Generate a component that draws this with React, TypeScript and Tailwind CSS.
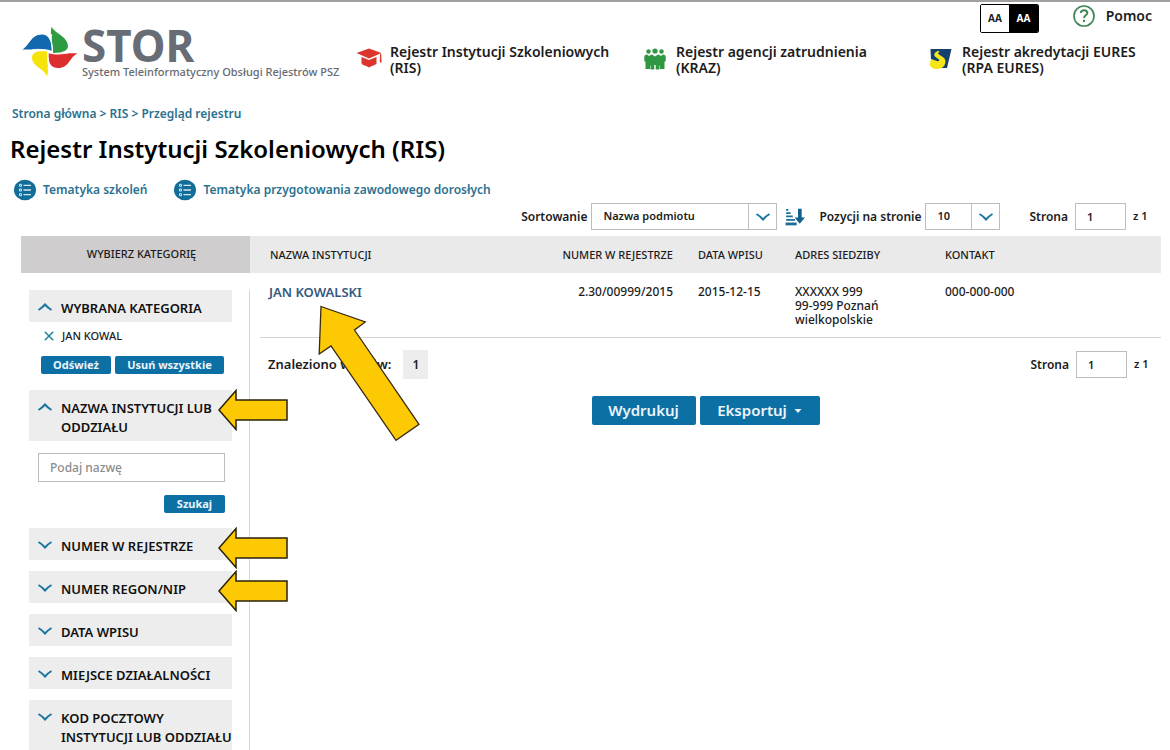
import React, { useState } from "react";

function Chevron({ up = false }: { up?: boolean }) {
  return (
    <svg viewBox="0 0 16 10" className="h-[10px] w-4 shrink-0" fill="none" stroke="#1b769f" strokeWidth="2" aria-hidden="true">
      <path d={up ? "M1.5 8Q5 6 8 2.5Q11 6 14.5 8" : "M1.5 2Q5 4 8 7.5Q11 4 14.5 2"} />
    </svg>
  );
}

function Logo() {
  return (
    <svg viewBox="0 0 56 52" className="h-[52px] w-14 shrink-0" aria-hidden="true">
      <path d="M0.5 23.5C7 20 9 8.500 20 8.500C27 8.500 30 16 29.500 25C23 22 16 24 0.500 23.500Z" fill="#1268ad" />
      <path d="M29.500 0.500C32 7 45.500 10 46 20C46 24 42 27 31 27C31 17 27.500 12 29.500 0.500Z" fill="#2e9a42" />
      <path d="M55.500 27.500C47 31 48 42 36 42C29 42 26 37 26.500 27C35 29.500 44 26.500 55.500 27.500Z" fill="#dc2f2d" />
      <path d="M25 50.500C23 43 10 41 10 31.500C10 26 16 24.500 25.500 25.500C24 36 28 41 25 50.500Z" fill="#f7e30c" />
      <path d="M29.700 8C28 16 31.500 20 30.500 27.500M10 23.800C20 22.500 24 24 30 27M26 25.500C25.500 33 27.500 37 26 43M26 26.500C33 29 39 28 46 27" fill="none" stroke="#fff" strokeWidth="0.900" />
    </svg>
  );
}

function CapIcon() {
  return (
    <svg viewBox="0 0 26 20" className="h-5 w-[26px] shrink-0" fill="#dc352c" aria-hidden="true">
      <path d="M13 0.500L25.500 5L13 10.500L0.500 5Z" />
      <path d="M5.500 9L13 12L20.500 9V15.500C19 17.500 16 17.500 13 19.500C10 17.500 7 17.500 5.500 15.500Z" />
      <path d="M24 6H25.200L25.500 14.500H23.800Z" />
    </svg>
  );
}

function PeopleIcon() {
  return (
    <svg viewBox="0 0 22 22" className="mx-0.5 h-[22px] w-[22px] shrink-0" fill="#2f9741" aria-hidden="true">
      <circle cx="4.500" cy="3.500" r="2.200" />
      <circle cx="11" cy="3" r="2.600" />
      <circle cx="17.500" cy="3.500" r="2.200" />
      <path d="M0.300 9Q0.300 6.500 3 6.500L5 8L7 6.700L8 6.500L11 8.500L14 6.500L15 6.700L17 8L19 6.500Q21.700 6.500 21.700 9V13.500H20.500V21H16V17.500H15.500V21.500H11.700V17H10.300V21.500H6.500V17.500H6V21H1.500V13.500H0.300Z" />
    </svg>
  );
}

function EuresIcon() {
  return (
    <svg viewBox="0 0 24 22" className="mx-px h-[22px] w-6 shrink-0" aria-hidden="true">
      <path d="M1.500 1H22.500L18 20H12L2 12Z" fill="#15416f" />
      <path d="M9 3C5 4.500 4.500 7 6.500 9L10 11.500C11 13 9 14 6.500 12.500L2 11L0.500 17C3 21.500 9 22 12.500 20C17 17.500 17.500 12 14.500 9.500L10 6.500C8.500 5.500 9 4.500 11 3.500Z" fill="#f5e618" />
    </svg>
  );
}

function ListBadge() {
  return (
    <svg viewBox="0 0 22 22" className="h-[22px] w-[22px] shrink-0" fill="none" aria-hidden="true">
      <ellipse cx="11" cy="11" rx="11" ry="10.300" fill="#126d99" />
      <g stroke="#cfe6f1" strokeWidth="1.300">
        <path d="M9.500 6.300H17M9.500 11H17M9.500 15.700H17" />
        <path d="M5.500 5.300H7.500V7.300H5.500ZM5.500 10H7.500V12H5.500ZM5.500 14.700H7.500V16.700H5.500Z" strokeWidth="1" />
      </g>
    </svg>
  );
}

function SortIcon() {
  return (
    <svg viewBox="0 0 18 16" className="h-[18px] w-5" aria-hidden="true">
      <path d="M1 1.500H3M1 4.500H5M1 7.500H7M1 10.500H9" stroke="#1b6d98" strokeWidth="1.600" />
      <path d="M0.500 13H10.500V15.500H0.500Z" fill="#1b6d98" />
      <path d="M11.700 0.500H15V8.500H18L13.300 14L8.700 8.500H11.700Z" fill="#125f90" />
    </svg>
  );
}

function SideArrow() {
  return (
    <svg viewBox="0 0 70 42" className="pointer-events-none absolute -right-14 -top-px z-10 h-[42px] w-[70px]" aria-hidden="true">
      <path d="M1 21L18 1.500V11H69V31H18V40.500Z" fill="#fdc903" stroke="#2b220b" strokeWidth="1.500" />
    </svg>
  );
}

function Panel({ title, open = false, arrow = false }: { title: string; open?: boolean; arrow?: boolean }) {
  return (
    <div className="relative">
      <button type="button" aria-expanded={open} className="flex w-full items-start bg-[#ededed] pb-1 pl-2 pt-[9px] text-left text-[13px] font-semibold leading-[19px] text-[#111111]">
        <span className="mt-[3px] flex w-6 shrink-0">
          <Chevron up={open} />
        </span>
        <span className="min-w-0 flex-1 whitespace-pre">{title}</span>
      </button>
      {arrow && <SideArrow />}
    </div>
  );
}

function Select({ label, options, wide = false }: { label: string; options: string[]; wide?: boolean }) {
  return (
    <label className="flex items-center gap-1">
      <span>{label}</span>
      <span className={wide ? "relative flex h-[27px] w-[186px] border border-[#bdbdbd] text-[11px]" : "relative flex h-[27px] w-[75px] border border-[#bdbdbd] text-[11px]"}>
        <select className="w-full appearance-none bg-transparent pl-[11px] outline-none">
          {options.map((o) => (
            <option key={o}>{o}</option>
          ))}
        </select>
        <span className="pointer-events-none absolute inset-y-0 right-0 flex w-7 items-center justify-center border-l border-[#bdbdbd]">
          <Chevron />
        </span>
      </span>
    </label>
  );
}

function Pager() {
  const [page, setPage] = useState("1");
  return (
    <div className="flex items-center gap-[7px] text-[12px]">
      <label className="flex items-center gap-[7px]">
        Strona
        <input value={page} onChange={(e) => setPage(e.target.value)} className="h-[27px] w-[51px] border border-[#bdbdbd] pl-[11px] text-[11px] outline-none" />
      </label>
      <span className="w-[21px] text-[11px]">z 1</span>
    </div>
  );
}

const registers = [
  { name: "Rejestr Instytucji Szkoleniowych", code: "(RIS)", icon: <CapIcon /> },
  { name: "Rejestr agencji zatrudnienia", code: "(KRAZ)", icon: <PeopleIcon /> },
  { name: "Rejestr akredytacji EURES", code: "(RPA EURES)", icon: <EuresIcon /> },
];

const smallButton = "h-[18px] rounded-[2px] bg-[#0d70a5] text-[11px] font-bold leading-[18px] text-[#e9f5fb]";
const bigButton = "flex h-[29px] items-center justify-center rounded-[2px] bg-[#0d70a5] text-[15px] font-semibold text-[#e9f5fb]";

export default function App() {
  return (
    <div className="min-h-screen overflow-x-hidden border-t-2 border-[#a0a0a0] bg-white font-['Noto_Sans',sans-serif] text-[#1c1c1c]">
      <header className="flex">
        <a href="#stor" className="flex w-[356px] shrink-0 items-start pl-[22px] pt-6">
          <Logo />
          <span className="ml-1 flex flex-col whitespace-nowrap">
            <span className="text-[44px] font-bold leading-[38px] text-[#686c75]">STOR</span>
            <span className="text-[11px] font-medium leading-4 text-[#666970]">System Teleinformatyczny Obsługi Rejestrów PSZ</span>
          </span>
        </a>
        <div className="min-w-0 flex-1">
          <div className="flex h-[42px] items-start justify-end pr-[18px] pt-[2px]">
            <div className="flex h-[29px] w-[59px] overflow-hidden rounded-[2px] border border-black text-[10px] font-bold">
              <button type="button" className="flex-1 bg-white">AA</button>
              <button type="button" className="flex-1 bg-black text-white">AA</button>
            </div>
            <a href="#pomoc" className="ml-[34px] mt-px flex items-center gap-[11px] text-sm font-semibold leading-[22px]">
              <svg viewBox="0 0 22 22" className="h-[22px] w-[22px]" fill="none" stroke="#438657" aria-hidden="true">
                <circle cx="11" cy="11" r="10" strokeWidth="1.700" />
                <path d="M7.800 8C8 5.800 9.300 5.200 11 5.200C13 5.200 14.300 6.300 14.300 8C14.300 10.300 11 10.200 11 13M11 14.800V17" strokeWidth="2" />
              </svg>
              Pomoc
            </a>
          </div>
          <nav className="grid grid-cols-[286px_286px_auto] text-sm font-semibold leading-4">
            {registers.map((r) => (
              <a key={r.code} href="#rejestr" className="flex items-start gap-2 whitespace-nowrap">
                <span className="mt-1 flex">{r.icon}</span>
                <span>
                  {r.name}
                  <br />
                  {r.code}
                </span>
              </a>
            ))}
          </nav>
        </div>
      </header>

      <nav className="mt-6 pl-3 text-xs font-semibold leading-5 text-[#2b7190]">
        <a href="#home">Strona główna</a> &gt; <a href="#ris">RIS</a> &gt; <a href="#przeglad">Przegląd rejestru</a>
      </nav>
      <h1 className="mt-[9px] pl-[10px] text-2xl font-semibold leading-8 text-black">Rejestr Instytucji Szkoleniowych (RIS)</h1>
      <div className="mt-[14px] flex gap-[27px] pl-[14px] text-xs font-semibold leading-[22px] text-[#2b7190]">
        <a href="#szkolenia" className="flex gap-[7px]"><ListBadge />Tematyka szkoleń</a>
        <a href="#dorosli" className="flex gap-[7px]"><ListBadge />Tematyka przygotowania zawodowego dorosłych</a>
      </div>

      <div className="mt-[2px] flex items-center justify-end whitespace-nowrap pr-2 text-[12px] font-semibold">
        <Select label="Sortowanie" options={["Nazwa podmiotu", "Data wpisu"]} wide />
        <button type="button" aria-label="Kierunek sortowania" className="ml-2 mr-[14px]"><SortIcon /></button>
        <Select label="Pozycji na stronie" options={["10", "20", "50"]} />
        <div className="ml-[29px] mr-2"><Pager /></div>
      </div>

      <div className="mt-[6px] flex items-stretch pl-[21px] pr-[9px]">
        <aside className="flex w-[229px] shrink-0 flex-col">
          <h2 className="flex h-[37px] items-center justify-center bg-[#cfcdce] pl-3 text-[11px] font-medium">WYBIERZ KATEGORIĘ</h2>
          <div className="mt-[17px] flex-1 border-r border-[#d8d8d8] pl-2 pr-[17px]">
            <Panel title="WYBRANA KATEGORIA" open />
            <div className="ml-[15px] mt-[5px] flex items-center gap-2 text-[11px] font-medium leading-[18px]">
              <button type="button" aria-label="Usuń JAN KOWAL">
                <svg viewBox="0 0 10 10" className="h-[10px] w-[10px]" stroke="#1f8295" strokeWidth="1.500" aria-hidden="true">
                  <path d="M0.800 0.800L9.200 9.200M9.200 0.800L0.800 9.200" />
                </svg>
              </button>
              JAN KOWAL
            </div>
            <div className="ml-3 mt-[11px] flex gap-1">
              <button type="button" className={smallButton + " w-[70px]"}>Odśwież</button>
              <button type="button" className={smallButton + " w-[109px]"}>Usuń wszystkie</button>
            </div>
            <div className="mt-4">
              <Panel title={"NAZWA INSTYTUCJI LUB\nODDZIAŁU"} open arrow />
            </div>
            <div className="mt-3 pl-[9px] pr-[7px]">
              <input aria-label="Podaj nazwę" placeholder="Podaj nazwę" className="h-[29px] w-full border border-[#bdbdbd] pl-[11px] text-xs font-medium outline-none placeholder:text-[#8c8c8c]" />
              <div className="mt-[13px] flex justify-end">
                <button type="button" className={smallButton + " w-[61px]"}>Szukaj</button>
              </div>
            </div>
            <div className="mt-[15px] flex flex-col gap-[11px]">
              <Panel title="NUMER W REJESTRZE" arrow />
              <Panel title="NUMER REGON/NIP" arrow />
              <Panel title="DATA WPISU" />
              <Panel title="MIEJSCE DZIAŁALNOŚCI" />
              <Panel title={"KOD POCZTOWY\nINSTYTUCJI LUB ODDZIAŁU"} />
            </div>
          </div>
        </aside>

        <main className="relative min-w-0 flex-1">
          <table className="w-full table-fixed text-left text-[12px] font-medium leading-[14px]">
            <colgroup>
              <col />
              <col className="w-[146px]" />
              <col className="w-[97px]" />
              <col className="w-[150px]" />
              <col className="w-[228px]" />
            </colgroup>
            <thead>
              <tr className="h-[37px] whitespace-nowrap bg-[#eaeaea] text-[11px]">
                <th className="pl-5 font-medium">NAZWA INSTYTUCJI</th>
                <th className="pr-[13px] text-right font-medium">NUMER W REJESTRZE</th>
                <th className="pl-3 font-medium">DATA WPISU</th>
                <th className="pl-3 font-medium">ADRES SIEDZIBY</th>
                <th className="pl-3 font-medium">KONTAKT</th>
              </tr>
            </thead>
            <tbody>
              <tr className="h-16 align-top">
                <td className="pl-[19px] pt-3 text-[13px] font-semibold leading-[14px] text-[#34597f]"><a href="#jan">JAN KOWALSKI</a></td>
                <td className="pr-[13px] pt-3 text-right">2.30/00999/2015</td>
                <td className="pl-3 pt-3">2015-12-15</td>
                <td className="pl-3 pt-3">XXXXXX 999<br />99-999 Poznań<br />wielkopolskie</td>
                <td className="pl-3 pt-3">000-000-000</td>
              </tr>
            </tbody>
          </table>
          <div className="ml-[10px] flex items-center justify-between border-t border-[#d5d5d5] pl-2 pt-3 font-semibold">
            <div className="flex items-center gap-3 text-[13px]">
              Znaleziono wpisów:
              <span className="flex h-[29px] w-[25px] items-center justify-center bg-[#ededed] text-[12px]">1</span>
            </div>
            <div className="mr-[6px]"><Pager /></div>
          </div>
          <div className="mt-[17px] flex justify-center gap-1">
            <button type="button" className={bigButton + " w-[104px]"}>Wydrukuj</button>
            <button type="button" className={bigButton + " w-[120px] gap-[7px]"}>
              Eksportuj
              <svg viewBox="0 0 8 4" className="h-1 w-2" fill="#e9f5fb" aria-hidden="true"><path d="M0.500 0H7.500L4 4Z" /></svg>
            </button>
          </div>
          <svg viewBox="318 305 103 137" className="pointer-events-none absolute left-[68px] top-[69px] h-[137px] w-[103px]" aria-hidden="true">
            <path d="M321 306.500L365.300 322L354.500 330L419 424.300L396 440.300L331 346L319.200 354Z" fill="#fdc903" stroke="#3a2b10" strokeWidth="1.300" />
          </svg>
        </main>
      </div>
    </div>
  );
}
